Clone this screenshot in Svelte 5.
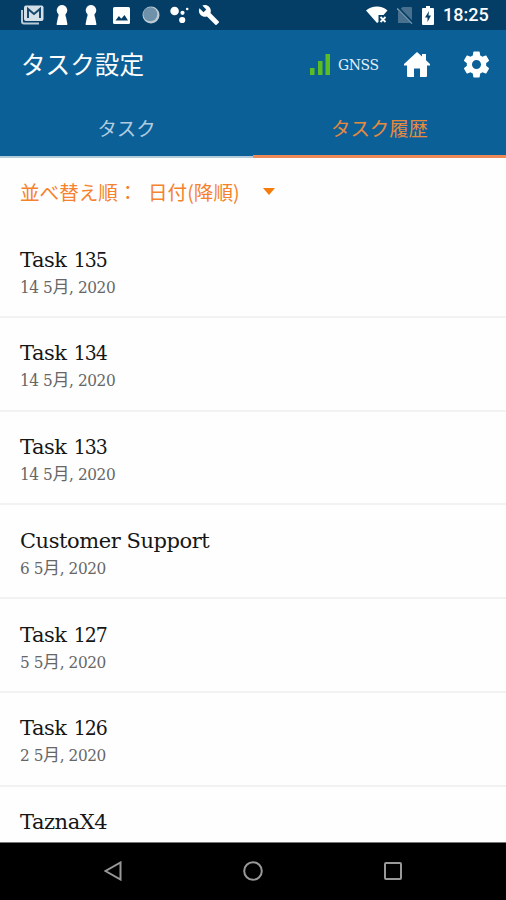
<script>
    /**
     * @typedef {Object} Task
     * @property {string} name
     * @property {string} [number]
     * @property {string} [date]
     */

    /** @type {Task[]} */
    const tasks = [
        { name: "Task", number: "135", date: "14 5月, 2020" },
        { name: "Task", number: "134", date: "14 5月, 2020" },
        { name: "Task", number: "133", date: "14 5月, 2020" },
        { name: "Customer Support", date: "6 5月, 2020" },
        { name: "Task", number: "127", date: "5 5月, 2020" },
        { name: "Task", number: "126", date: "2 5月, 2020" },
        { name: "TaznaX4" },
    ];

    const tabs = ["タスク", "タスク履歴"];
    let activeTab = $state(1);
</script>

{#snippet keyhole()}
    <svg width="14" height="20" viewBox="0 0 14 20" fill="#fff">
        <path d="M7 0a5.300 5.300 0 0 0-3.500 9.200v2.300h-.4L1.600 19a.8.8 0 0 0 .8 1h9.200a.8.8 0 0 0 .8-1l-1.500-7.500h-.4V9.200A5.300 5.300 0 0 0 7 0z" />
    </svg>
{/snippet}

<div class="screen">
    <div class="status">
        <div class="notifications">
            <svg width="23" height="20" viewBox="0 0 23 20">
                <path d="M1 5v11.500a2 2 0 0 0 2 2h15" fill="none" stroke="#b9cad7" stroke-width="2" />
                <rect x="3" y=".5" width="19.500" height="15.500" rx="2" fill="#d5dfe7" />
                <path d="M7 13V4l6 5 6-5v9" fill="none" stroke="#17486d" stroke-width="2" />
            </svg>
            {@render keyhole()}
            {@render keyhole()}
            <svg class="picture" width="17" height="17" viewBox="0 0 17 17">
                <rect width="17" height="17" rx="1.500" fill="#fff" />
                <path d="M2.500 13.500l3.400-4.500 2.400 2.700L11.500 8l3.500 5.500z" fill="#043e66" />
            </svg>
            <svg class="globe" width="18" height="18" viewBox="0 0 18 18">
                <circle cx="9" cy="9" r="8.500" fill="#bccbd5" />
                <circle cx="8.300" cy="8.300" r="7" fill="#6f91aa" />
            </svg>
            <svg class="dots" width="19" height="18" viewBox="0 0 19 18" fill="#fff">
                <circle cx="4.600" cy="5" r="4.300" />
                <circle cx="12.500" cy="6.800" r="2.100" />
                <circle cx="12.200" cy="14" r="3.100" />
                <circle cx="17.200" cy="3" r="1.300" />
            </svg>
            <svg width="22" height="22" viewBox="0 0 24 24" fill="#fff">
                <path d="M22.700 19l-9.100-9.100c.9-2.300.4-5-1.500-6.900-2-2-5-2.400-7.400-1.300L9 6 6 9 1.600 4.700C.4 7.100.9 10.100 2.900 12.100c1.900 1.900 4.600 2.400 6.900 1.500l9.100 9.100c.4.400 1 .4 1.400 0l2.300-2.300c.5-.4.5-1.100.1-1.400z" />
            </svg>
        </div>
        <div class="system">
            <svg width="22" height="18" viewBox="0 0 22 18">
                <path d="M0 4.500C6-1 16-1 21.500 4.500L17.500 9H12.500v7l-1.500 1z" fill="#fff" />
                <path d="M14.500 11l5 5m0-5l-5 5" stroke="#fff" stroke-width="1.800" />
            </svg>
            <svg width="16" height="18" viewBox="0 0 16 18">
                <path d="M5.500 1H14a1 1 0 0 1 1 1v15H1V5.500z" fill="#47718f" />
                <path d="M0 1l16 16.500" stroke="#043e66" stroke-width="3" />
                <path d="M0 2.200l15 15.500" stroke="#7795aa" stroke-width="1.300" />
            </svg>
            <svg width="12" height="19" viewBox="0 0 12 19">
                <path d="M4 0h4v2h3a1 1 0 0 1 1 1v15a1 1 0 0 1-1 1H1a1 1 0 0 1-1-1V3a1 1 0 0 1 1-1h3z" fill="#fff" />
                <path d="M7 5L3 11.500h2.500V16L9 9.500H6.500z" fill="#043e66" />
            </svg>
            <span class="clock">18:25</span>
        </div>
    </div>

    <header>
        <div class="toolbar">
            <h1>タスク設定</h1>
            <div class="actions">
                <svg width="20" height="21" viewBox="0 0 20 21" fill="#5bbd21">
                    <path d="M0 14h4.500v7H0zM8 7h4.500v14H8zM15.500 0H20v21h-4.500z" />
                </svg>
                <span class="gnss">GNSS</span>
                <svg class="home" width="26" height="25" viewBox="0 0 26 25" fill="#fff">
                    <path d="M13 0l5 4.500V2h4v6.200l4 3.800v1.500h-3V24a1 1 0 0 1-1 1h-6v-8.500h-6V25H4a1 1 0 0 1-1-1V13.500H0V12z" />
                </svg>
                <svg class="gear" width="31" height="31" viewBox="0 0 24 24" fill="#fff">
                    <path d="M19.430 12.980c.04-.32.070-.64.070-.98s-.03-.66-.07-.98l2.110-1.650c.19-.15.240-.42.120-.64l-2-3.460c-.12-.22-.39-.3-.61-.22l-2.490 1c-.52-.4-1.080-.73-1.690-.98l-.38-2.650C14.460 2.180 14.250 2 14 2h-4c-.25 0-.46.180-.49.420l-.38 2.650c-.61.250-1.170.590-1.690.98l-2.490-1c-.23-.09-.49 0-.61.220l-2 3.460c-.13.220-.07.490.12.640l2.110 1.650c-.04.320-.07.650-.07.980s.03.660.070.980l-2.110 1.650c-.19.150-.24.420-.12.640l2 3.460c.12.220.39.300.61.220l2.490-1c.52.400 1.080.730 1.690.980l.38 2.650c.03.240.24.420.49.420h4c.25 0 .46-.18.490-.42l.38-2.650c.61-.25 1.170-.59 1.690-.98l2.490 1c.23.090.49 0 .61-.22l2-3.460c.12-.22.070-.49-.12-.64l-2.110-1.650zM12 15.500c-1.930 0-3.500-1.570-3.500-3.500s1.570-3.500 3.500-3.500 3.500 1.570 3.500 3.500-1.570 3.500-3.500 3.500z" />
                </svg>
            </div>
        </div>
        <nav>
            {#each tabs as tab, i}
                <button class="tab {i === activeTab ? 'active' : ''}" onclick={() => (activeTab = i)}>
                    {tab}
                </button>
            {/each}
        </nav>
    </header>

    <div class="sort">
        <span class="sort-label">並べ替え順：</span>
        <span class="sort-value">日付(降順)</span>
        <svg width="12" height="7" viewBox="0 0 12 7" fill="#f57c0b">
            <path d="M0 0h12L6 7z" />
        </svg>
    </div>

    <ul class="tasks">
        {#each tasks as task}
            <li>
                <div class="name">
                    {task.name}
                    {#if task.number}
                        <span class="number">{task.number}</span>
                    {/if}
                </div>
                {#if task.date}
                    <div class="date">{task.date}</div>
                {/if}
            </li>
        {/each}
    </ul>

    <footer>
        <svg width="18" height="20" viewBox="0 0 18 20">
            <path d="M16.500 1.500v17L1.500 10z" />
        </svg>
        <svg width="20" height="20" viewBox="0 0 20 20">
            <circle cx="10" cy="10" r="8.800" />
        </svg>
        <svg width="18" height="18" viewBox="0 0 18 18">
            <rect x="1" y="1" width="16" height="16" rx="1" />
        </svg>
    </footer>
</div>

<style>
    :global(body) {
        margin: 0;
    }

    .screen {
        width: 506px;
        height: 900px;
        display: flex;
        flex-direction: column;
        overflow: hidden;
        background: #fefefe;
        font-family: "Noto Sans CJK JP", sans-serif;
    }

    svg {
        display: block;
        flex: none;
    }

    .status {
        height: 30px;
        flex: none;
        display: flex;
        justify-content: space-between;
        background: #043e66;
    }

    .notifications {
        display: flex;
        align-items: center;
        padding-left: 21px;
        gap: 11px;
    }

    .notifications svg:nth-child(2) {
        margin-right: 4px;
    }

    .picture {
        margin-left: 4px;
    }

    .globe {
        margin-left: 1px;
    }

    .dots {
        margin-left: -1px;
        margin-right: -2px;
    }

    .system {
        display: flex;
        align-items: center;
        gap: 9px;
        padding-right: 18px;
    }

    .clock {
        width: 45px;
        font: 500 18px/32px Roboto, sans-serif;
        color: #fff;
    }

    header {
        height: 128px;
        flex: none;
        background: #0c6098;
    }

    .toolbar {
        height: 69px;
        display: flex;
        align-items: center;
        justify-content: space-between;
        padding: 0 14px 0 21px;
    }

    h1 {
        margin: 0 0 4px;
        font-size: 24.600px;
        font-weight: 400;
        line-height: 36px;
        color: #fff;
    }

    .actions {
        display: flex;
        align-items: center;
    }

    .gnss {
        width: 41px;
        margin-left: 8px;
        font: 15.500px/20px "DejaVu Serif Condensed", "DejaVu Serif", serif;
        font-stretch: condensed;
        letter-spacing: -0.4px;
        color: #e3effa;
    }

    .home {
        margin-left: 25px;
    }

    .gear {
        margin-left: 31px;
    }

    nav {
        display: flex;
        height: 59px;
    }

    .tab {
        flex: 1;
        padding: 1px 0 0;
        border: 0;
        border-bottom: 2px solid #b4cbdc;
        background: none;
        font: 19.400px/56px "Noto Sans CJK JP", sans-serif;
        color: #b0cce0;
    }

    .tab.active {
        padding-top: 2px;
        border-bottom: 3px solid #ee8a57;
        line-height: 54px;
        color: #e68a3e;
    }

    .sort {
        height: 66px;
        flex: none;
        display: flex;
        align-items: center;
        padding-left: 20px;
        font-size: 19.600px;
        color: #f5822d;
    }

    .sort-label {
        width: 128px;
        white-space: nowrap;
    }

    .sort-value {
        width: 115px;
        white-space: nowrap;
    }

    .tasks {
        flex: 1;
        min-height: 0;
        margin: 0;
        padding: 0;
        overflow: hidden;
        list-style: none;
    }

    li {
        box-sizing: border-box;
        height: 93.750px;
        padding: 22.500px 20px 0;
        border-bottom: 2px solid #f2f2f2;
    }

    .name {
        font-family: "DejaVu Serif", serif;
        font-size: 21px;
        line-height: 27px;
        letter-spacing: -0.45px;
        color: #161616;
    }

    .number {
        margin-left: 1px;
        font-family: "DejaVu Serif Condensed", "DejaVu Serif", serif;
        font-stretch: condensed;
        letter-spacing: -1.1px;
    }

    .date {
        font-family: "DejaVu Serif Condensed", "DejaVu Serif", "Noto Sans CJK JP", serif;
        font-stretch: condensed;
        font-size: 17px;
        line-height: 26px;
        letter-spacing: -0.4px;
        color: #666;
    }

    footer {
        height: 58px;
        flex: none;
        box-sizing: border-box;
        display: flex;
        align-items: center;
        justify-content: center;
        gap: 121px;
        border-top: 1px solid #777;
        background: #000;
        fill: none;
        stroke: #999;
        stroke-width: 2;
    }

    footer svg {
        margin-bottom: 2px;
    }
</style>
